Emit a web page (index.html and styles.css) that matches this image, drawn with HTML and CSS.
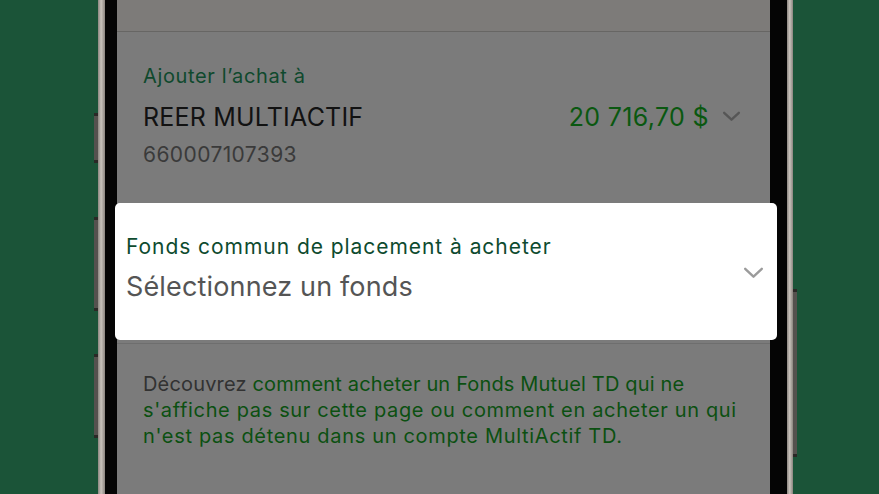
FILE: index.html
```html
<!DOCTYPE html>
<html lang="fr">
<head>
<meta charset="utf-8">
<title>Achat de fonds</title>
<link rel="stylesheet" href="styles.css">
</head>
<body>
<div class="stage">
  <div class="phone">
    <div class="edge edge-left">
      <span class="btn btn-l1"></span>
      <span class="btn btn-l2"></span>
      <span class="btn btn-l3"></span>
    </div>
    <div class="bezel bezel-left"></div>
    <div class="screen">
      <div class="topbar"></div>
      <section class="account">
        <div class="label">Ajouter l’achat à</div>
        <div class="account-row">
          <div class="account-name">REER MULTIACTIF</div>
          <div class="amount-wrap">
            <span class="amount">20 716,70 $</span>
            <svg class="chev chev-dark" viewBox="0 0 20 12" width="19" height="11"><path d="M2 2 L10 9.5 L18 2" fill="none" stroke="currentColor" stroke-width="2.6" stroke-linecap="round" stroke-linejoin="round"/></svg>
          </div>
        </div>
        <div class="account-no">660007107393</div>
      </section>
      <section class="fund-slot"></section>
      <section class="info">
        <p><span class="l1"><span class="muted">Découvrez </span><a class="link" href="#">comment acheter un Fonds Mutuel TD qui ne</a></span><br><span class="l2"><a class="link" href="#">s'affiche pas sur cette page ou comment en acheter un qui</a></span><br><span class="l3"><a class="link" href="#">n'est pas détenu dans un compte MultiActif TD.</a></span></p>
      </section>
    </div>
    <div class="bezel bezel-right"></div>
    <div class="edge edge-right">
      <span class="btn btn-r1"></span>
    </div>
  </div>

  <div class="fund-card">
    <div class="fund-text">
      <div class="fund-label">Fonds commun de placement à acheter</div>
      <div class="fund-placeholder">Sélectionnez un fonds</div>
    </div>
    <svg class="chev chev-light" viewBox="0 0 22 13" width="21" height="12"><path d="M2 2 L11 10.5 L20 2" fill="none" stroke="currentColor" stroke-width="2.6" stroke-linecap="round" stroke-linejoin="round"/></svg>
  </div>
</div>
</body>
</html>
```

FILE: styles.css
```css
* { box-sizing: border-box; }
html, body { margin: 0; padding: 0; }
body {
  width: 879px;
  height: 494px;
  overflow: hidden;
  background: #1b5438;
  font-family: "Inter", "Noto Sans", sans-serif;
}
.stage {
  position: relative;
  width: 879px;
  height: 494px;
}
.phone {
  display: flex;
  height: 494px;
  margin-left: 98px;
  width: 695px;
}
.edge {
  position: relative;
  background: linear-gradient(90deg, #8d8781, #c9c3bc 45%, #8a847e);
}
.edge-left { width: 7px; }
.edge-right { width: 6px; }
.btn {
  position: absolute;
  width: 4px;
  background: #55514e;
  border-top: 3px solid #2a2826;
  border-bottom: 3px solid #2a2826;
}
.btn-l1 { left: -4px; top: 113px; height: 50px; }
.btn-l2 { left: -4px; top: 217px; height: 94px; }
.btn-l3 { left: -4px; top: 354px; height: 84px; }
.btn-r1 { right: -4px; top: 289px; height: 168px; }
.bezel { background: #050505; }
.bezel-left { width: 12px; }
.bezel-right { width: 17px; }
.screen {
  width: 653px;
  background: #7b7b7b;
  display: flex;
  flex-direction: column;
}
.topbar {
  height: 32px;
  background: #7d7b79;
  border-bottom: 1px solid #676664;
  flex: none;
}
.account {
  padding: 32px 29px 0 26px;
}
.label {
  font-size: 20px;
  line-height: 24px;
  color: #0f492d;
  letter-spacing: 0.65px;
}
.account-row {
  margin-top: 14px;
  display: flex;
  align-items: center;
  justify-content: space-between;
}
.account-name {
  font-size: 25px;
  line-height: 30px;
  color: #121212;
  letter-spacing: 0.2px;
}
.amount-wrap {
  display: flex;
  align-items: center;
  gap: 13px;
}
.amount {
  font-size: 25px;
  line-height: 30px;
  color: #0a5810;
  letter-spacing: 0.35px;
}
.chev { display: block; flex: none; }
.chev-dark { color: #565656; margin-top: -2px; }
.account-no {
  margin-top: 10px;
  font-size: 21px;
  line-height: 26px;
  color: #3a3a3a;
  letter-spacing: 0.4px;
}
.fund-slot {
  height: 176px;
  border-bottom: 1px solid #6e6e6e;
  flex: none;
}
.info {
  padding: 27px 25px 0 26px;
}
.info p {
  margin: 0;
  font-size: 20px;
  line-height: 26px;
}
.l1 { letter-spacing: 0.16px; }
.l2 { letter-spacing: 0.65px; }
.l3 { letter-spacing: 0.67px; }
.muted { color: #323232; }
.link { color: #0b5011; text-decoration: none; }

.fund-card {
  position: absolute;
  left: 115px;
  top: 203px;
  width: 662px;
  height: 137px;
  background: #ffffff;
  border-radius: 5px;
  padding: 32px 13px 0 11px;
  display: flex;
  justify-content: space-between;
  align-items: flex-start;
}
.fund-label {
  font-size: 21px;
  line-height: 24px;
  color: #0e4b2f;
  letter-spacing: 0.95px;
}
.fund-placeholder {
  margin-top: 12px;
  font-size: 27px;
  line-height: 32px;
  color: #555555;
  letter-spacing: 0.15px;
}
.chev-light { color: #9b9b9b; margin-top: 32px; }
```
